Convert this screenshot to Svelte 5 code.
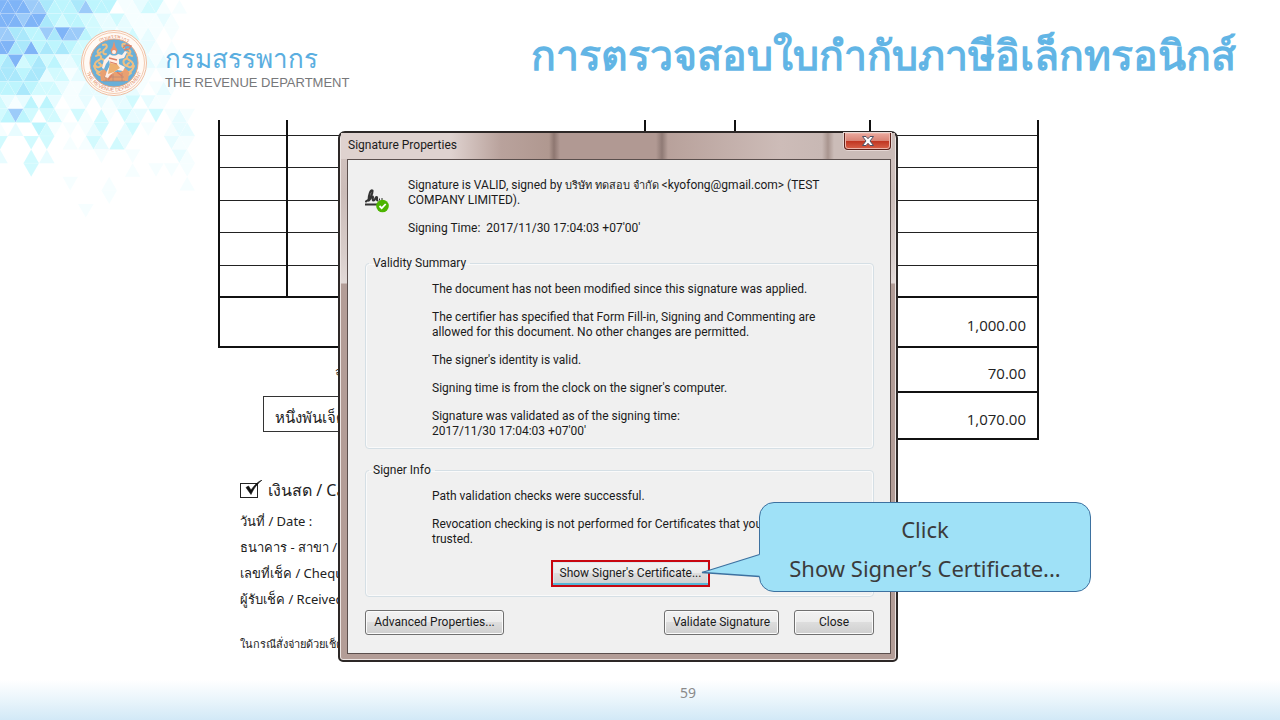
<script>
  const palette = {
    a: '#7fb4f7', b: '#9ccbf9', c: '#aae8fb', d: '#bdf5fd', e: '#d2fafe', f: '#e8fcff', g: '#f6feff'
  };
  const mosaic = [
    'aaaabbcdddcbddd.ggfeeg.g',
    'aaabaacdeddeeffefggggfg',
    'bbccddbcabbdeefgfegfg.g',
    'aaccadcdcdeefefgggffg.g',
    'dcaedcedffeeeefg.gffgfg',
    'cccdccfeegfeeegfffgg.gg',
    'dddcdeeefggfffgeefg.gfg',
    'efgfdgdf.ggf.fgffe.fgg.',
    'edbde.eeg.eg.eg.eff.e.gfg',
    'g.f..deg.g.gfe..fe.g..gff',
    'e...e.e..g.gef.ef.....fgg',
    'f...e.f......g...g.....fg',
    '....e............g..g.g.g',
    '.........g....g.........g',
    '..............g..........',
    '...........g.............'
  ];
  const half = 7.8;
  const rowHeight = 13.6;
  const tiles = mosaic.flatMap((row, r) =>
    [...row].map((key, k) => {
      const x = (k - 1) * half;
      const y = r * rowHeight;
      const down = (k + r) % 2 === 0;
      const points = down
        ? `${x},${y} ${x + 2 * half},${y} ${x + half},${y + rowHeight}`
        : `${x},${y + rowHeight} ${x + 2 * half},${y + rowHeight} ${x + half},${y}`;
      return { points, fill: palette[key] };
    }).filter((t) => t.fill)
  );

  const blankRows = [0, 1, 2, 3, 4];
  const payment = ['วันที่ / Date :', 'ธนาคาร - สาขา / Bank', 'เลขที่เช็ค / Cheque', 'ผู้รับเช็ค / Rceived'];
  let cash = $state(true);
</script>

<main class="slide">
  <svg class="mosaic" width="200" height="220" viewBox="0 0 200 220" aria-hidden="true">
    {#each tiles as t}
      <polygon points={t.points} fill={t.fill} stroke="#ffffff" stroke-width="0.4" stroke-opacity="0.3" />
    {/each}
  </svg>

  <header>
    <div class="brand">
      <svg class="seal" width="66" height="66" viewBox="0 0 66 66" aria-hidden="true">
        <defs>
          <path id="arc-top" d="M8 33a25 25 0 0 1 50 0" />
          <path id="arc-bottom" d="M3.500 32a29.500 29.500 0 0 0 59 0" />
        </defs>
        <circle cx="33" cy="33" r="32.500" fill="#fffaf5" stroke="#f0bea2" />
        <circle cx="33" cy="33" r="30.500" fill="none" stroke="#eeb492" stroke-width="0.700" />
        <circle cx="33" cy="33" r="24" fill="#69afd8" stroke="#e7a37f" />
        <text class="ring"><textPath href="#arc-top" startOffset="50%" text-anchor="middle">กรมสรรพากร</textPath></text>
        <text class="ring"><textPath href="#arc-bottom" startOffset="50%" text-anchor="middle">THE REVENUE DEPARTMENT</textPath></text>
        <g fill="none" stroke="#eebf83" stroke-width="2" stroke-linecap="round">
          <path d="M19 19c-5 3-1 6 1 3M15 26c5-3 7 2 3 4s-6 5-2 7c4 1 5-3 2-4M22 15c4-2 5 2 2 4s-2 6 1 5M13 36c2 6 5 7 8 5M21 29c4 1 3 6-1 7M16 43c3 3 6 3 8 1" />
          <path d="M47 19c5 3 1 6-1 3M51 26c-5-3-7 2-3 4s6 5 2 7c-4 1-5-3-2-4M44 14c-3-1-4 2-1 4M53 36c-2 6-5 7-8 5M45 29c-4 1-3 6 1 7M50 43c-3 3-6 3-8 1" />
        </g>
        <path d="M19 42l4-3 3 3h14l4-4 4 4-1 9H20z" fill="#e9a071" />
        <path d="M22 51h22M23 47h20M25 44v7M32 44v7M41 43v8" stroke="#b88a78" stroke-width="0.800" />
        <path d="M29 24c2 2 6 2 8 0l4 1 3-4 2 1-3 6-5 1v5l6 3-2 4-6-1-7 5-2 3-3-1 2-6 3-6-1-5-3 4-2 5-2-1 2-8z" fill="#fff0e8" />
        <path d="M33 11l1.500 6 2 3-1.500 4h-4l-1.500-4 2-3z" fill="#e8916d" />
        <circle cx="33" cy="22" r="2" fill="#fff0e8" />
        <path d="M29 33l7 1 3 4-6 4-6 2z" fill="#edb070" />
        <path d="M42 18l3-3 5 1-2 3-5 1M28 28l8 2M29 32l7 2M31 45l-4 5M36 42l5 4" stroke="#dc7f66" stroke-width="1.300" fill="none" />
      </svg>
      <div class="names">
        <span class="name-th">กรมสรรพากร</span>
        <span class="name-en">THE REVENUE DEPARTMENT</span>
      </div>
    </div>
    <h1>การตรวจสอบใบกำกับภาษีอิเล็กทรอนิกส์</h1>
  </header>

  <section class="document">
    <table>
      <colgroup>
        <col class="c-no" /><col /><col class="c-qty" /><col class="c-price" /><col class="c-amount" />
      </colgroup>
      <tbody>
        <tr class="stub"><td></td><td></td><td></td><td></td><td></td></tr>
        {#each blankRows as row (row)}
          <tr class="blank"><td></td><td></td><td></td><td></td><td></td></tr>
        {/each}
        <tr class="total first"><td colspan="4"></td><td>1,000.00</td></tr>
        <tr class="total tax"><td class="open" colspan="4"><div class="tax-label">จำนวนภาษีมูลค่าเพิ่ม</div></td><td>70.00</td></tr>
        <tr class="total">
          <td class="open" colspan="4"><div class="words">หนึ่งพันเจ็ดสิบบาทถ้วน</div></td>
          <td>1,070.00</td>
        </tr>
      </tbody>
    </table>

    <div class="payment">
      <label class="cash">
        <input type="checkbox" bind:checked={cash} />
        <span class="tick">
          <svg width="24" height="20" viewBox="0 0 24 20" aria-hidden="true">
            <rect x="0.500" y="3.500" width="17" height="14" fill="#fff" stroke="#222" />
            {#if cash}<path d="M6 7.500l2.500-1.500 2.500 4C14 6 17 2 22 0 17 4 14 8 11 14.500z" fill="#111" stroke="#111" stroke-width="0.600" />{/if}
          </svg>
        </span>
        เงินสด / Cash
      </label>
      {#each payment as line}
        <p>{line}</p>
      {/each}
      <p class="note">ในกรณีสั่งจ่ายด้วยเช็ค</p>
    </div>

    <div class="dialog" role="dialog" aria-labelledby="dialog-title">
      <div class="titlebar">
        <span id="dialog-title">Signature Properties</span>
        <button class="x" aria-label="Close window">
          <svg width="14" height="12" viewBox="0 0 14 12" aria-hidden="true">
            <path d="M1.500 1.500h3.500l2 2.200 2-2.200h3.500L9 6l3.500 4.500H9L7 8.300 5 10.500H1.500L5 6z" fill="#fff" stroke="#4d5266" />
          </svg>
        </button>
      </div>
      <div class="client">
        <div class="summary">
          <svg width="26" height="26" viewBox="2 0 26 26" aria-hidden="true">
            <path d="M3 14.500c4-2 7-8 6.500-11C7.500 2 5.500 9 5.500 13c0 2.500 2.500-3.500 4-3.500s-1 4 1 4 1.500-3.500 3-3.500-.5 3.500 1 3.500" fill="none" stroke="#333" stroke-width="2" stroke-linecap="round" />
            <path d="M16 12.500h1M18.500 12h1M2 17.500h12" stroke="#333" stroke-width="2" />
            <circle cx="19.500" cy="19" r="6.300" fill="#4cb400" />
            <path d="M16.500 19l2.200 2.200 4-4.200" fill="none" stroke="#fff" stroke-width="1.800" />
          </svg>
          <div>
            <p>Signature is VALID, signed by <span class="thai">บริษัท ทดสอบ จำกัด</span> &lt;kyofong@gmail.com&gt; (TEST<br />COMPANY LIMITED).</p>
            <p>Signing Time:&nbsp; 2017/11/30 17:04:03 +07'00'</p>
          </div>
        </div>

        <fieldset>
          <legend>Validity Summary</legend>
          <p>The document has not been modified since this signature was applied.</p>
          <p>The certifier has specified that Form Fill-in, Signing and Commenting are<br />allowed for this document. No other changes are permitted.</p>
          <p>The signer's identity is valid.</p>
          <p>Signing time is from the clock on the signer's computer.</p>
          <p>Signature was validated as of the signing time:<br />2017/11/30 17:04:03 +07'00'</p>
        </fieldset>

        <fieldset class="signer">
          <legend>Signer Info</legend>
          <p>Path validation checks were successful.</p>
          <p>Revocation checking is not performed for Certificates that you<br />trusted.</p>
          <button class="show">Show Signer's Certificate...</button>
        </fieldset>

        <div class="actions">
          <button class="advanced">Advanced Properties...</button>
          <button class="validate">Validate Signature</button>
          <button class="close">Close</button>
        </div>
      </div>
    </div>

    <div class="callout">
      <svg width="60" height="26" viewBox="0 0 60 26" aria-hidden="true">
        <path d="M60 1L58.500 1.500 1 19.500 58.500 23.500 60 24z" fill="#9fe1f7" />
        <path d="M58.500 1.500L1 19.500 58.500 23.500" fill="none" stroke="#3d71a0" stroke-width="1.300" />
      </svg>
      <span>Click</span>
      <span>Show Signer’s Certificate...</span>
    </div>
  </section>

  <footer>59</footer>
</main>

<style>
  :global(body) { margin: 0; background: #fff; }
  .slide {
    position: relative;
    min-height: 100vh;
    box-sizing: border-box;
    display: flex;
    flex-direction: column;
    overflow: hidden;
    background: #fff;
    font-family: "Noto Sans", "Open Sans", sans-serif;
  }
  .mosaic { position: absolute; left: 0; top: 0; }
  header {
    position: relative;
    display: flex;
    justify-content: space-between;
    align-items: flex-start;
    height: 120px;
    padding: 0 44px 0 81px;
    box-sizing: border-box;
  }
  .brand { display: flex; gap: 18px; padding-top: 30px; }
  .seal { flex: none; }
  .ring { font: 5px "Liberation Sans", sans-serif; fill: #df8d6a; }
  .names { display: flex; flex-direction: column; padding-top: 12px; white-space: nowrap; }
  .name-th { font: 26px/32px "Noto Sans", sans-serif; color: #5aaee0; }
  .name-en { font: 13px/18px "Liberation Sans", sans-serif; color: #77787a; }
  h1 {
    margin: 24px 0 0;
    font: bold 41px/64px "Angsana New", Norasi, Kinnari, "Liberation Serif", serif;
    color: #62b5e5;
    white-space: nowrap;
  }

  .document { position: relative; margin: 0 241px 0 218px; flex: 1; }
  table { width: 100%; border-collapse: collapse; table-layout: fixed; font: 15px/20px "Open Sans", sans-serif; color: #222; }
  .c-no { width: 68px; }
  .c-qty { width: 90px; }
  .c-price { width: 135px; }
  .c-amount { width: 168px; }
  td { padding: 0; border: 1px solid #222; border-left: 2px solid #111; border-right: 2px solid #111; box-sizing: border-box; }
  .stub td { height: 15px; border-top: 0; }
  .blank td { height: 32px; }
  .blank:nth-child(odd) td { height: 33px; }
  .total td { height: 47px; border: 2px solid #111; }
  .total.first td { height: 50px; }
  .total.tax td { height: 45px; }
  .total td:last-child { text-align: right; padding: 6px 11px 0 0; }
  .total td.open { border-left: 0; border-bottom: 0; vertical-align: top; }
  .total:last-child td.open { border-top: 0; }
  .tax-label { padding: 14px 0 0 116px; font-size: 13px; line-height: 20px; white-space: nowrap; }
  .words {
    width: 240px;
    height: 36px;
    box-sizing: border-box;
    margin: 4px 0 0 44px;
    padding-left: 11px;
    border: 1px solid #333;
    font-size: 15px;
    line-height: 40px;
    white-space: nowrap;
  }
  .payment { display: flex; flex-direction: column; padding: 34px 0 0 22px; font-size: 13px; color: #222; white-space: nowrap; }
  .payment p { margin: 0; line-height: 26px; }
  .payment .note { margin-top: 19px; font-size: 11px; }
  .cash { display: flex; align-items: center; gap: 4px; height: 32px; margin-bottom: 2px; font-size: 16px; }
  .cash input { position: absolute; opacity: 0; width: 18px; height: 18px; margin: 0; }
  .tick { display: flex; }

  .dialog {
    position: absolute;
    left: 120px;
    right: 141px;
    top: 11px;
    box-sizing: border-box;
    border: 2px solid #2d2827;
    border-radius: 7px 7px 5px 5px;
    padding: 0 5px 6px 7px;
    background: linear-gradient(180deg, #d3c4c1 0, #cbbcb8 60px, #d8cdca 120px, #e2d9d7 150px, #b39d97 151px, #b39d97 100%);
    box-shadow: inset 0 0 0 1px #ece4e2;
    font-size: 12px;
    line-height: 15px;
    color: #1b1b1b;
    font-family: Roboto, "Noto Sans", sans-serif;
  }
  .titlebar {
    display: flex;
    justify-content: space-between;
    height: 26px;
    margin: 0 -4px 0 -6px;
    padding: 0 4px 0 7px;
    background: linear-gradient(90deg, #dfd2cf 0, #dfd2cf 110px, #b9a29c 160px, #b09890 208px, #8e7771 213px, #b19993 219px, #b19993 315px, #8f7a75 321px, #b8a19b 327px, #cdbcb8 440px, #c8b8b4 481px, #a9958f 487px, #cbbcb8 493px);
  }
  .titlebar span { line-height: 24px; }
  .x {
    width: 47px;
    height: 17px;
    padding: 0;
    display: flex;
    justify-content: center;
    align-items: center;
    border: 1px solid #5d221b;
    border-top: 0;
    border-radius: 0 0 4px 4px;
    background: linear-gradient(180deg, #eba99e 0, #d98476 48%, #bf3420 50%, #d8624a 100%);
    box-shadow: inset 0 0 0 1px #eeb5aa, 0 0 0 1px #e6d8d5;
  }
  .client {
    box-sizing: border-box;
    border: 1px solid #5b4f4d;
    background: #f0f0f0;
    padding: 18px 16px 18px 17px;
    white-space: nowrap;
  }
  .client p { margin: 0 0 13px; }
  .summary { display: flex; gap: 17px; }
  .summary > svg { flex: none; margin-top: 9px; }
  .thai { font-size: 11px; line-height: 11px; }
  fieldset {
    min-width: 0;
    height: 193px;
    box-sizing: border-box;
    margin: 7px 0 0;
    padding: 11px 5px 0 66px;
    border: 1px solid #d5dfe5;
    border-radius: 4px;
    box-shadow: inset 0 0 0 1px #fafafa;
  }
  legend { margin-left: -63px; padding: 0 4px; }
  fieldset.signer { height: 134px; margin-top: 14px; }
  .client button, .client .show {
    box-sizing: border-box;
    height: 25px;
    padding: 0;
    border: 1px solid #707070;
    border-radius: 3px;
    box-shadow: inset 0 0 0 1px #fbfbfb;
    background: linear-gradient(180deg, #f2f2f2 0, #ebebeb 49%, #dddddd 50%, #cfcfcf 100%);
    font: inherit;
    color: #1b1b1b;
  }
  .client .show {
    display: block;
    width: 159px;
    height: 27px;
    margin-left: 119px;
    border: 2px solid #c8060f;
    border-radius: 0;
    box-shadow: inset 0 -2px 0 #56b5d6, inset 0 0 0 1px #d8e8ee;
  }
  .actions { display: flex; margin-top: 13px; }
  .advanced { width: 139px; margin-right: auto; }
  .validate { width: 115px; margin-right: 15px; }
  .close { width: 80px; }

  .callout {
    position: absolute;
    right: -52px;
    top: 382px;
    width: 332px;
    height: 90px;
    box-sizing: border-box;
    padding-top: 7px;
    border: 1px solid #3d71a0;
    border-radius: 15px;
    background: #9fe1f7;
    display: flex;
    flex-direction: column;
    align-items: center;
    font: 22px/39px "Noto Sans", sans-serif;
    color: #3b3b3b;
    white-space: nowrap;
  }
  .callout svg { position: absolute; left: -59px; top: 50px; }
  footer {
    height: 40px;
    padding-left: 96px;
    background: linear-gradient(180deg, #ffffff 0, #eef7fc 40%, #d2e9f7 100%);
    text-align: center;
    font: 14px/26px "Noto Sans", sans-serif;
    color: #8a8a8a;
  }
</style>
